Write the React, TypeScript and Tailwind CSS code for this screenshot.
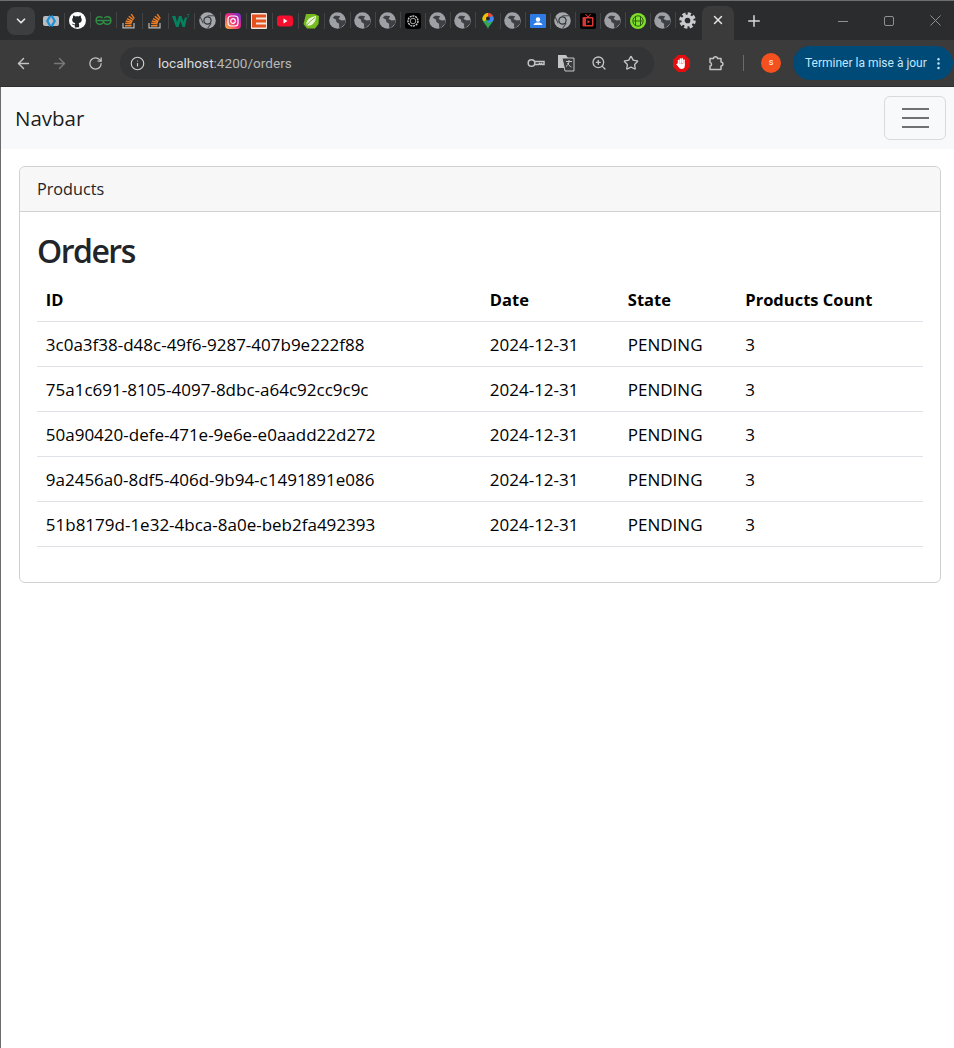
import { ArrowLeft, ArrowRight, Info, Plus, RotateCw, Star, X, ZoomIn, EllipsisVertical, ChevronDown } from "lucide-react";

const orders = [
  "3c0a3f38-d48c-49f6-9287-407b9e222f88",
  "75a1c691-8105-4097-8dbc-a64c92cc9c9c",
  "50a90420-defe-471e-9e6e-e0aadd22d272",
  "9a2456a0-8df5-406d-9b94-c1491891e086",
  "51b8179d-1e32-4bca-8a0e-beb2fa492393",
];

function Globe() {
  return (
    <svg width="17" height="17" viewBox="0 0 16 16">
      <circle cx="8" cy="8" r="7.800" fill="#9da1a6" />
      <path d="M7.500 3.500l3 .5L9 6.500l3 1.500 3.500-.5-.5 3.500-4 4-1.500-.5 0-3.500-2.500-1.500-.5-2.500-3-1.500 2-2z" fill="#3e4044" />
    </svg>
  );
}

function Chrome() {
  return (
    <svg width="17" height="17" viewBox="0 0 16 16">
      <circle cx="8" cy="8" r="7.800" fill="#a4a8ac" />
      <path d="M8 3.500h7M4 10.500L1 4.500M11.500 10.500L8 15.500" stroke="#45484c" strokeWidth="1" />
      <circle cx="8" cy="8" r="3.900" fill="#2f3134" />
      <circle cx="8" cy="8" r="2.800" fill="#a4a8ac" />
    </svg>
  );
}

function Gear() {
  return (
    <svg width="17" height="17" viewBox="0 0 16 16">
      <circle cx="8" cy="8" r="6.300" fill="none" stroke="#c9cbce" strokeWidth="3" strokeDasharray="3 1.950" />
      <circle cx="8" cy="8" r="4.200" fill="none" stroke="#c9cbce" strokeWidth="3" />
    </svg>
  );
}

function Favicon({ kind }: { kind: string }) {
  if (kind === "globe") return <Globe />;
  if (kind === "chrome") return <Chrome />;
  if (kind === "gear") return <Gear />;
  if (kind === "cap")
    return (
      <svg width="16" height="16" viewBox="0 0 16 16" fill="none">
        <rect y="3" width="16" height="10" rx="2" fill="#b9bcc0" />
        <path d="M6.500 2L3 8l3.500 6h2.500L5.500 8 9 2zM9.500 2l3.500 6-3.500 6H7l3.500-6L7 2z" fill="#1a8fd7" />
      </svg>
    );
  if (kind === "github")
    return (
      <svg width="17" height="17" viewBox="0 0 16 16">
        <circle cx="8" cy="8" r="8" fill="#fff" />
        <path d="M5.500 14.700v-2.200c-2 .3-2.500-1-3-1.600 1 .1 1.600.9 3 .8 0-.6.2-1 .5-1.300-2-.3-3-1.300-3-3.200 0-.8.3-1.500.8-2-.1-.5-.1-1.200.2-1.800.7 0 1.400.4 1.900.8.9-.2 2.300-.2 3.200 0 .5-.4 1.200-.8 1.900-.8.3.6.3 1.300.2 1.800.5.5.8 1.200.8 2 0 1.900-1 2.900-3 3.200.4.4.5.9.5 1.500v2.500z" fill="#25282b" />
      </svg>
    );
  if (kind === "gfg")
    return (
      <svg width="17" height="17" viewBox="0 0 16 16" fill="none" stroke="#2f8d46" strokeWidth="1.300">
        <path d="M1 8h14M8 8c0 3-1.500 3.500-3.500 3.500S1 10.200 1 8s1.500-3.500 3.500-3.500c1.200 0 2 .4 2.700 1.200M8 8c0 3 1.500 3.500 3.500 3.500S15 10.200 15 8s-1.500-3.500-3.500-3.500c-1.200 0-2 .4-2.700 1.200" />
      </svg>
    );
  if (kind === "so")
    return (
      <svg width="16" height="16" viewBox="0 0 16 16" fill="none">
        <path d="M2 10v4.800h11V10" stroke="#bcbbbb" strokeWidth="1.200" />
        <path d="M4 12.800h6.500M4.200 10.300l6.300.6M4.800 8l6.100 1.500M6 5.600l5.500 2.700M7.800 3.200l4.600 3.700M10.300 1.100l3 4.500" stroke="#f48024" strokeWidth="1.400" />
      </svg>
    );
  if (kind === "w3")
    return (
      <svg width="18" height="16" viewBox="0 0 18 16">
        <path d="M0 3h3.500l1.500 6 2-6h2.500l2 6 1.300-4.500h2.200L13 14h-2.500L8.500 8l-2 6H4z" fill="#04815f" />
        <path d="M15 1.500h2l-1 1.200c1 .2 1 1.800-1 1.800" fill="none" stroke="#04815f" strokeWidth=".7" />
      </svg>
    );
  if (kind === "insta")
    return (
      <svg width="16" height="16" viewBox="0 0 16 16">
        <defs>
          <linearGradient id="ig" x1="0" y1="1" x2="1" y2="0">
            <stop offset="0" stopColor="#fdc13a" />
            <stop offset="0.5" stopColor="#ee2a7b" />
            <stop offset="1" stopColor="#6a2fd6" />
          </linearGradient>
        </defs>
        <rect width="16" height="16" rx="4" fill="url(#ig)" />
        <rect x="3" y="3" width="10" height="10" rx="3" fill="none" stroke="#fff" strokeWidth="1.200" />
        <circle cx="8" cy="8" r="2.300" fill="none" stroke="#fff" strokeWidth="1.200" />
      </svg>
    );
  if (kind === "e")
    return (
      <svg width="16" height="16" viewBox="0 0 16 16">
        <rect width="16" height="16" rx="1" fill="#f0e5dc" />
        <path d="M1 1.500h14v3H5v2h10v3H5v2h10v3H1z" fill="#e4511e" />
      </svg>
    );
  if (kind === "yt")
    return (
      <svg width="16" height="16" viewBox="0 0 16 16">
        <rect y="2.500" width="16" height="11" rx="3" fill="#f50f2f" />
        <path d="M6.500 5.500l4 2.500-4 2.500z" fill="#fff" />
      </svg>
    );
  if (kind === "spring")
    return (
      <svg width="16" height="16" viewBox="0 0 16 16">
        <path d="M3 1h8.500L16 3 15.500 11 12 15.500H4L.5 11z" fill="#77bc1f" />
        <path d="M3.500 12.500C2.500 8 6 4 13 3c0 6-3.500 10.500-9.500 9.500z" fill="#e9f3dc" />
        <path d="M3.500 12.500C6 9 9 7 12 4.500" stroke="#77bc1f" fill="none" />
      </svg>
    );
  if (kind === "gpt")
    return (
      <svg width="16" height="16" viewBox="0 0 16 16">
        <rect width="16" height="16" rx="3" fill="#000" />
        <circle cx="8" cy="8" r="5" fill="none" stroke="#cfcfcf" strokeWidth="1.400" strokeDasharray="2 .8" />
        <circle cx="8" cy="8" r="2.800" fill="none" stroke="#a8a8a8" />
      </svg>
    );
  if (kind === "maps")
    return (
      <svg width="16" height="16" viewBox="0 0 16 16">
        <path d="M8 0a5.600 5.600 0 0 1 5.600 5.600c0 4-4 6-5.600 10.400C6.400 11.600 2.400 9.600 2.400 5.600A5.600 5.600 0 0 1 8 0z" fill="#34a853" />
        <path d="M4 2a5.600 5.600 0 0 1 4-2v3.500L5.200 8 2.800 7.500a5.600 5.600 0 0 1 1.200-5.500z" fill="#fbbc04" />
        <path d="M8 0a5.600 5.600 0 0 1 5 3L8 5z" fill="#ea4335" />
        <path d="M13 3a5.600 5.600 0 0 1 0 5l-5 2V5z" fill="#4285f4" />
        <circle cx="8" cy="5.600" r="2" fill="#25282b" />
      </svg>
    );
  if (kind === "contact")
    return (
      <svg width="16" height="16" viewBox="0 0 16 16">
        <rect width="16" height="14" y="1" rx="1" fill="#2f7be5" />
        <circle cx="8" cy="6.500" r="2.200" fill="#fff" />
        <path d="M3.500 12c.5-2 2.500-2.500 4.500-2.500s4 .5 4.500 2.500z" fill="#fff" />
      </svg>
    );
  if (kind === "tv")
    return (
      <svg width="16" height="16" viewBox="0 0 16 16">
        <rect width="16" height="16" rx="2" fill="#000" />
        <path d="M5.500 1L8 4l2.500-3" stroke="#e33" fill="none" />
        <rect x="2.500" y="4" width="11" height="9.500" rx="1" fill="#d93636" />
        <rect x="6" y="5.500" width="6" height="6.500" fill="#000" />
        <path d="M7.500 7l2.500 1.700-2.500 1.700z" fill="#e33" />
      </svg>
    );
  return (
    <svg width="16" height="16" viewBox="0 0 16 16">
      <circle cx="8" cy="8" r="8" fill="#7ee02a" />
      <circle cx="8" cy="8" r="5.200" fill="none" stroke="#2e5c0e" />
      <path d="M3.500 8h9M5.500 3.500v9M10.500 3.500v9" stroke="#2e5c0e" fill="none" />
    </svg>
  );
}

const favicons = [
  "cap", "github", "gfg", "so", "so", "w3", "chrome", "insta", "e", "yt", "spring", "globe", "globe", "globe",
  "gpt", "globe", "globe", "maps", "globe", "contact", "chrome", "tv", "globe", "grid", "globe", "gear",
];

function BrowserChrome() {
  return (
    <div className="text-[#c7cacc]">
      <div className="h-10 bg-[#2b2c2e] border-t border-[#6d6e70] flex items-center">
        <div className="ml-[7px] w-7 h-7 rounded-lg bg-[#3d3e40] flex items-center justify-center shrink-0">
          <ChevronDown size={14} strokeWidth={3} className="text-[#e3e4e6]" />
        </div>
        <div className="ml-[3px] flex items-center">
          {favicons.map((kind, i) => (
            <div
              key={i}
              className={`${i < 12 ? "w-[26px]" : "w-[25px]"} flex items-center justify-center relative shrink-0`}
            >
              <Favicon kind={kind} />
              {i < favicons.length - 1 && <div className="absolute right-[-1px] top-0 h-4 w-px bg-[#434446]" />}
            </div>
          ))}
        </div>
        <div className="ml-[2px] mt-[5px] self-stretch flex-none w-[32px] bg-[#3b3b3b] rounded-t-lg flex justify-center items-start">
          <X size={14} strokeWidth={2.5} className="mt-[7px] text-[#e3e4e6]" />
        </div>
        <Plus size={18} strokeWidth={2} className="ml-[11px] text-[#d8d9db]" />
        <div className="ml-auto flex items-center gap-[36px] pr-[13px]">
          <svg width="10" height="10" viewBox="0 0 10 10" stroke="#8f9092" fill="none">
            <path d="M0 5.500h10" />
          </svg>
          <svg width="10" height="10" viewBox="0 0 10 10" stroke="#8f9092" fill="none">
            <rect x=".5" y=".5" width="9" height="9" rx="1.500" />
          </svg>
          <svg width="11" height="11" viewBox="0 0 11 11" stroke="#8f9092" fill="none">
            <path d="M.5.500l10 10M10.500.500l-10 10" />
          </svg>
        </div>
      </div>
      <div className="h-[47px] bg-[#3b3b3b] flex items-center border-b border-[#2e2f30]">
        <ArrowLeft size={17} strokeWidth={2} className="ml-[15px] text-[#c2c4c6]" />
        <ArrowRight size={17} strokeWidth={2} className="ml-[19px] text-[#777879]" />
        <RotateCw size={15} strokeWidth={2} className="ml-[20px] text-[#c2c4c6]" />
        <div className="ml-[17px] w-[534px] h-8 rounded-full bg-[#333435] flex items-center">
          <Info size={15} strokeWidth={1.8} className="ml-[10px] text-[#d0d2d4]" />
          <span className="ml-[13px] text-[13.6px] font-[Roboto,sans-serif] text-[#d9dbdd]">
            localhost<span className="text-[#b5b7b9]">:4200/orders</span>
          </span>
          <div className="ml-auto flex items-center gap-[16px] pr-[15px]">
            <svg width="18" height="18" viewBox="0 0 18 18" fill="none" stroke="#c2c4c6" strokeWidth="1.500" className="-mr-[4px]">
              <circle cx="4.500" cy="9" r="3.300" />
              <path d="M8 7.500h9v3h-1.500l-1-1-1 1-1-1-1 1H8" />
            </svg>
            <svg width="18" height="18" viewBox="0 0 18 18">
              <path d="M1 1h8l2 3h-2v10H1z" fill="#c2c4c6" />
              <path d="M5 4h12v13H8z" fill="#3b3b3b" stroke="#c2c4c6" />
              <path d="M9 7.500h6M12 6v1.500c0 2-1.500 4-3 5M10.500 9c.5 1.500 2.500 3.500 4 4" stroke="#c2c4c6" fill="none" />
            </svg>
            <ZoomIn size={16} className="text-[#c2c4c6]" />
            <Star size={16} className="text-[#c2c4c6]" />
          </div>
        </div>
        <svg width="17" height="17" viewBox="0 0 17 17" className="ml-[19px] shrink-0">
          <path d="M5 0h7l5 5v7l-5 5H5l-5-5V5z" fill="#e50d0d" />
          <path d="M5.600 5.500v4M7.400 4v4M9.200 3.800v4M11 5v4.500" stroke="#fff" strokeWidth="1.600" strokeLinecap="round" />
          <path d="M4.800 8.500h7v2.500c0 2-1.300 3-3.300 3-1.500 0-2.300-.7-3-2L3.300 9.500c.4-.8 1-.9 1.500-1z" fill="#fff" />
        </svg>
        <svg width="17" height="17" viewBox="0 0 17 17" fill="none" stroke="#c2c4c6" strokeWidth="1.500" strokeLinejoin="round" className="ml-[18px]">
          <path d="M2 3.500h3.500c0-2.500 4-2.500 4 0H13v3.500c2.500 0 2.500 4 0 4v3.500H2V11c2 0 2-3.500 0-3.500z" />
        </svg>
        <div className="ml-[18px] w-px h-4 bg-[#6a6b6d]" />
        <div className="ml-[17px] w-5 h-5 rounded-full bg-[#f4511e] text-white text-[9px] flex items-center justify-center font-[Roboto,sans-serif]">
          s
        </div>
        <div className="ml-[12px] h-[34px] w-[160px] shrink-0 rounded-full bg-[#004a77] flex items-center pl-[12px] text-[#c2e7ff] text-[12px] font-[Roboto,sans-serif]">
          <span className="whitespace-nowrap">Terminer la mise à jour</span>
          <EllipsisVertical size={15} className="ml-[4px] shrink-0" />
        </div>
      </div>
    </div>
  );
}

export default function App() {
  return (
    <div className="min-h-[1048px] bg-white overflow-hidden font-['Open_Sans',sans-serif]">
      <BrowserChrome />
      <div className="border-l border-[#6b6b6b] min-h-[961px]">
        <nav className="h-[62px] bg-[#f8f9fa] flex items-center justify-between pl-[14px] pr-2">
          <span className="text-[20.5px] text-[#000000e6]">Navbar</span>
          <button className="w-[62px] h-11 border border-[#d9dadb] rounded-md flex flex-col items-center justify-center gap-[6.5px]">
            <span className="w-[27px] h-[2.5px] bg-[#6f7173]" />
            <span className="w-[27px] h-[2.5px] bg-[#6f7173]" />
            <span className="w-[27px] h-[2.5px] bg-[#6f7173]" />
          </button>
        </nav>
        <div className="pt-[17px] pl-[18px] pr-[13px]">
          <div className="border border-[#d0d1d2] rounded-md">
            <div className="h-[45px] bg-[#f7f7f7] border-b border-[#d0d1d2] rounded-t-md flex items-center pl-[17px] text-[16.2px] text-[#212529]">
              Products
            </div>
            <div className="px-[17px] pt-[16px] pb-[35px]">
              <h1 className="text-[32px] leading-[46px] font-semibold tracking-[-1.5px] text-[#212529]">Orders</h1>
              <table className="w-full text-left text-black mt-[1px]">
                <thead>
                  <tr className="border-b border-[#dee2e6] h-[46px]">
                    <th className="pl-[8.8px] pt-[5px] w-[444px] text-[16.5px] font-bold">ID</th>
                    <th className="pl-[8.8px] pt-[5px] w-[138px] text-[16.5px] font-bold">Date</th>
                    <th className="pl-[8.8px] pt-[5px] w-[117.5px] text-[16.5px] font-bold">State</th>
                    <th className="pl-[8.8px] pt-[5px] text-[16.5px] font-bold">Products Count</th>
                  </tr>
                </thead>
                <tbody className="text-[17px]">
                  {orders.map((id) => (
                    <tr key={id} className="border-b border-[#dee2e6] h-[45px]">
                      <td className="pl-[8.8px] pt-[3px]">{id}</td>
                      <td className="pl-[8.8px] pt-[3px]">2024-12-31</td>
                      <td className="pl-[8.8px] pt-[3px]">PENDING</td>
                      <td className="pl-[8.8px] pt-[3px]">3</td>
                    </tr>
                  ))}
                </tbody>
              </table>
            </div>
          </div>
        </div>
      </div>
    </div>
  );
}
